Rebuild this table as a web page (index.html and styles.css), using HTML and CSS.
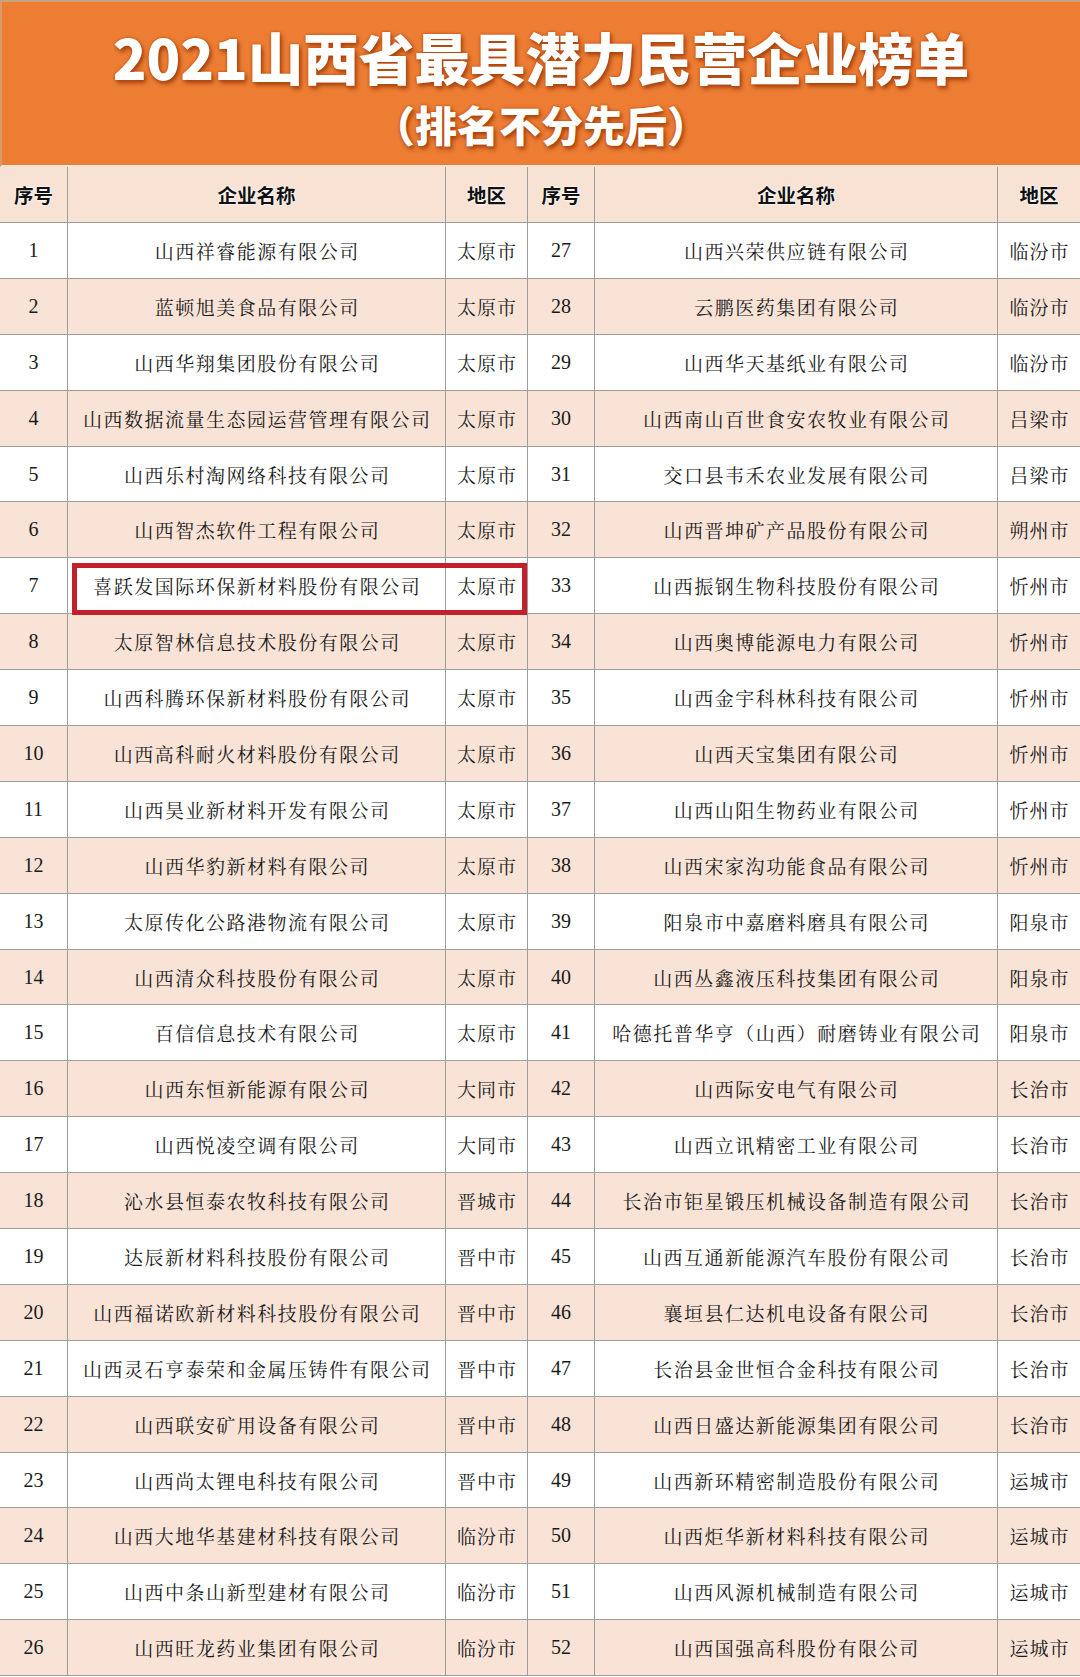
FILE: index.html
```html
<!DOCTYPE html>
<html lang="zh-CN">
<head>
<meta charset="utf-8">
<title>2021山西省最具潜力民营企业榜单</title>
<link rel="stylesheet" href="styles.css">
</head>
<body>
<div class="page">
  <header class="banner">
    <h1 class="title">2021山西省最具潜力民营企业榜单</h1>
    <div class="subtitle">（排名不分先后）</div>
  </header>
  <div class="table">
    <div class="row head">
      <div class="c">序号</div><div class="c">企业名称</div><div class="c">地区</div>
      <div class="c">序号</div><div class="c">企业名称</div><div class="c">地区</div>
    </div>
    <div class="row"><div class="c n">1</div><div class="c t">山西祥睿能源有限公司</div><div class="c r">太原市</div><div class="c n">27</div><div class="c t">山西兴荣供应链有限公司</div><div class="c r">临汾市</div></div>
    <div class="row alt"><div class="c n">2</div><div class="c t">蓝顿旭美食品有限公司</div><div class="c r">太原市</div><div class="c n">28</div><div class="c t">云鹏医药集团有限公司</div><div class="c r">临汾市</div></div>
    <div class="row"><div class="c n">3</div><div class="c t">山西华翔集团股份有限公司</div><div class="c r">太原市</div><div class="c n">29</div><div class="c t">山西华天基纸业有限公司</div><div class="c r">临汾市</div></div>
    <div class="row alt"><div class="c n">4</div><div class="c t">山西数据流量生态园运营管理有限公司</div><div class="c r">太原市</div><div class="c n">30</div><div class="c t">山西南山百世食安农牧业有限公司</div><div class="c r">吕梁市</div></div>
    <div class="row"><div class="c n">5</div><div class="c t">山西乐村淘网络科技有限公司</div><div class="c r">太原市</div><div class="c n">31</div><div class="c t">交口县韦禾农业发展有限公司</div><div class="c r">吕梁市</div></div>
    <div class="row alt"><div class="c n">6</div><div class="c t">山西智杰软件工程有限公司</div><div class="c r">太原市</div><div class="c n">32</div><div class="c t">山西晋坤矿产品股份有限公司</div><div class="c r">朔州市</div></div>
    <div class="row"><div class="c n">7</div><div class="c t">喜跃发国际环保新材料股份有限公司</div><div class="c r">太原市</div><div class="c n">33</div><div class="c t">山西振钢生物科技股份有限公司</div><div class="c r">忻州市</div></div>
    <div class="row alt"><div class="c n">8</div><div class="c t">太原智林信息技术股份有限公司</div><div class="c r">太原市</div><div class="c n">34</div><div class="c t">山西奥博能源电力有限公司</div><div class="c r">忻州市</div></div>
    <div class="row"><div class="c n">9</div><div class="c t">山西科腾环保新材料股份有限公司</div><div class="c r">太原市</div><div class="c n">35</div><div class="c t">山西金宇科林科技有限公司</div><div class="c r">忻州市</div></div>
    <div class="row alt"><div class="c n">10</div><div class="c t">山西高科耐火材料股份有限公司</div><div class="c r">太原市</div><div class="c n">36</div><div class="c t">山西天宝集团有限公司</div><div class="c r">忻州市</div></div>
    <div class="row"><div class="c n">11</div><div class="c t">山西昊业新材料开发有限公司</div><div class="c r">太原市</div><div class="c n">37</div><div class="c t">山西山阳生物药业有限公司</div><div class="c r">忻州市</div></div>
    <div class="row alt"><div class="c n">12</div><div class="c t">山西华豹新材料有限公司</div><div class="c r">太原市</div><div class="c n">38</div><div class="c t">山西宋家沟功能食品有限公司</div><div class="c r">忻州市</div></div>
    <div class="row"><div class="c n">13</div><div class="c t">太原传化公路港物流有限公司</div><div class="c r">太原市</div><div class="c n">39</div><div class="c t">阳泉市中嘉磨料磨具有限公司</div><div class="c r">阳泉市</div></div>
    <div class="row alt"><div class="c n">14</div><div class="c t">山西清众科技股份有限公司</div><div class="c r">太原市</div><div class="c n">40</div><div class="c t">山西丛鑫液压科技集团有限公司</div><div class="c r">阳泉市</div></div>
    <div class="row"><div class="c n">15</div><div class="c t">百信信息技术有限公司</div><div class="c r">太原市</div><div class="c n">41</div><div class="c t">哈德托普华亨（山西）耐磨铸业有限公司</div><div class="c r">阳泉市</div></div>
    <div class="row alt"><div class="c n">16</div><div class="c t">山西东恒新能源有限公司</div><div class="c r">大同市</div><div class="c n">42</div><div class="c t">山西际安电气有限公司</div><div class="c r">长治市</div></div>
    <div class="row"><div class="c n">17</div><div class="c t">山西悦凌空调有限公司</div><div class="c r">大同市</div><div class="c n">43</div><div class="c t">山西立讯精密工业有限公司</div><div class="c r">长治市</div></div>
    <div class="row alt"><div class="c n">18</div><div class="c t">沁水县恒泰农牧科技有限公司</div><div class="c r">晋城市</div><div class="c n">44</div><div class="c t">长治市钜星锻压机械设备制造有限公司</div><div class="c r">长治市</div></div>
    <div class="row"><div class="c n">19</div><div class="c t">达辰新材料科技股份有限公司</div><div class="c r">晋中市</div><div class="c n">45</div><div class="c t">山西互通新能源汽车股份有限公司</div><div class="c r">长治市</div></div>
    <div class="row alt"><div class="c n">20</div><div class="c t">山西福诺欧新材料科技股份有限公司</div><div class="c r">晋中市</div><div class="c n">46</div><div class="c t">襄垣县仁达机电设备有限公司</div><div class="c r">长治市</div></div>
    <div class="row"><div class="c n">21</div><div class="c t">山西灵石亨泰荣和金属压铸件有限公司</div><div class="c r">晋中市</div><div class="c n">47</div><div class="c t">长治县金世恒合金科技有限公司</div><div class="c r">长治市</div></div>
    <div class="row alt"><div class="c n">22</div><div class="c t">山西联安矿用设备有限公司</div><div class="c r">晋中市</div><div class="c n">48</div><div class="c t">山西日盛达新能源集团有限公司</div><div class="c r">长治市</div></div>
    <div class="row"><div class="c n">23</div><div class="c t">山西尚太锂电科技有限公司</div><div class="c r">晋中市</div><div class="c n">49</div><div class="c t">山西新环精密制造股份有限公司</div><div class="c r">运城市</div></div>
    <div class="row alt"><div class="c n">24</div><div class="c t">山西大地华基建材科技有限公司</div><div class="c r">临汾市</div><div class="c n">50</div><div class="c t">山西炬华新材料科技有限公司</div><div class="c r">运城市</div></div>
    <div class="row"><div class="c n">25</div><div class="c t">山西中条山新型建材有限公司</div><div class="c r">临汾市</div><div class="c n">51</div><div class="c t">山西风源机械制造有限公司</div><div class="c r">运城市</div></div>
    <div class="row alt"><div class="c n">26</div><div class="c t">山西旺龙药业集团有限公司</div><div class="c r">临汾市</div><div class="c n">52</div><div class="c t">山西国强高科股份有限公司</div><div class="c r">运城市</div></div>
    <div class="highlight"></div>
  </div>
</div>
</body>
</html>
```

FILE: styles.css
```css
* { box-sizing: border-box; }
html, body { margin: 0; padding: 0; background: #ffffff; }
.page {
  width: 1080px;
  font-family: "Noto Serif CJK SC", "Noto Sans CJK SC", sans-serif;
  color: #1a1a1a;
}
.banner {
  height: 167px;
  background: #ec7d33;
  border-top: 2px solid #c9a37f;
  border-left: 2px solid #d99a6a;
  border-bottom: 2px solid #f1e6dc;
  display: flex;
  flex-direction: column;
  align-items: center;
  padding-top: 24px;
}
.title {
  margin: 0;
  font-family: "Noto Sans CJK SC", sans-serif;
  font-weight: 900;
  font-size: 55.5px;
  line-height: 60px;
  color: #ffffff;
  text-shadow: 0 0 3px #b8460c, 2px 3px 4px rgba(140, 45, 0, 0.75);
}
.subtitle {
  margin-top: 14px;
  font-family: "Noto Sans CJK SC", sans-serif;
  font-weight: 900;
  font-size: 42px;
  line-height: 48px;
  color: #ffffff;
  text-shadow: 0 0 3px #b8460c, 2px 3px 4px rgba(140, 45, 0, 0.75);
}
.table {
  position: relative;
  display: grid;
  grid-template-columns: 68px 378px 82px 67px 403px 82px;
  grid-template-rows: 56px repeat(26, 55.9px);
}
.row { display: contents; }
.c {
  display: flex;
  align-items: center;
  justify-content: center;
  border-right: 1.5px solid #9d9d9d;
  border-bottom: 1.5px solid #9d9d9d;
  background: #ffffff;
  white-space: nowrap;
}
.c:nth-child(6) { border-right: none; }
.row.alt .c { background: #f8e3d6; }
.row.head .c {
  background: #f8e2d4;
  font-family: "Noto Sans CJK SC", sans-serif;
  font-weight: 700;
  font-size: 19.5px;
  color: #111111;
  text-shadow: 0 0 3px #ffffff, 0 0 2px #ffffff;
}
.n {
  font-family: "Liberation Serif", serif;
  font-size: 20px;
}
.t {
  font-size: 19px;
  letter-spacing: 1.5px;
  padding-left: 1.5px;
}
.r {
  font-size: 19px;
  letter-spacing: 1px;
  padding-left: 1px;
}
.highlight {
  position: absolute;
  left: 72px;
  top: 396px;
  width: 455px;
  height: 52px;
  border: 5px solid #c3202d;
  pointer-events: none;
}
```
